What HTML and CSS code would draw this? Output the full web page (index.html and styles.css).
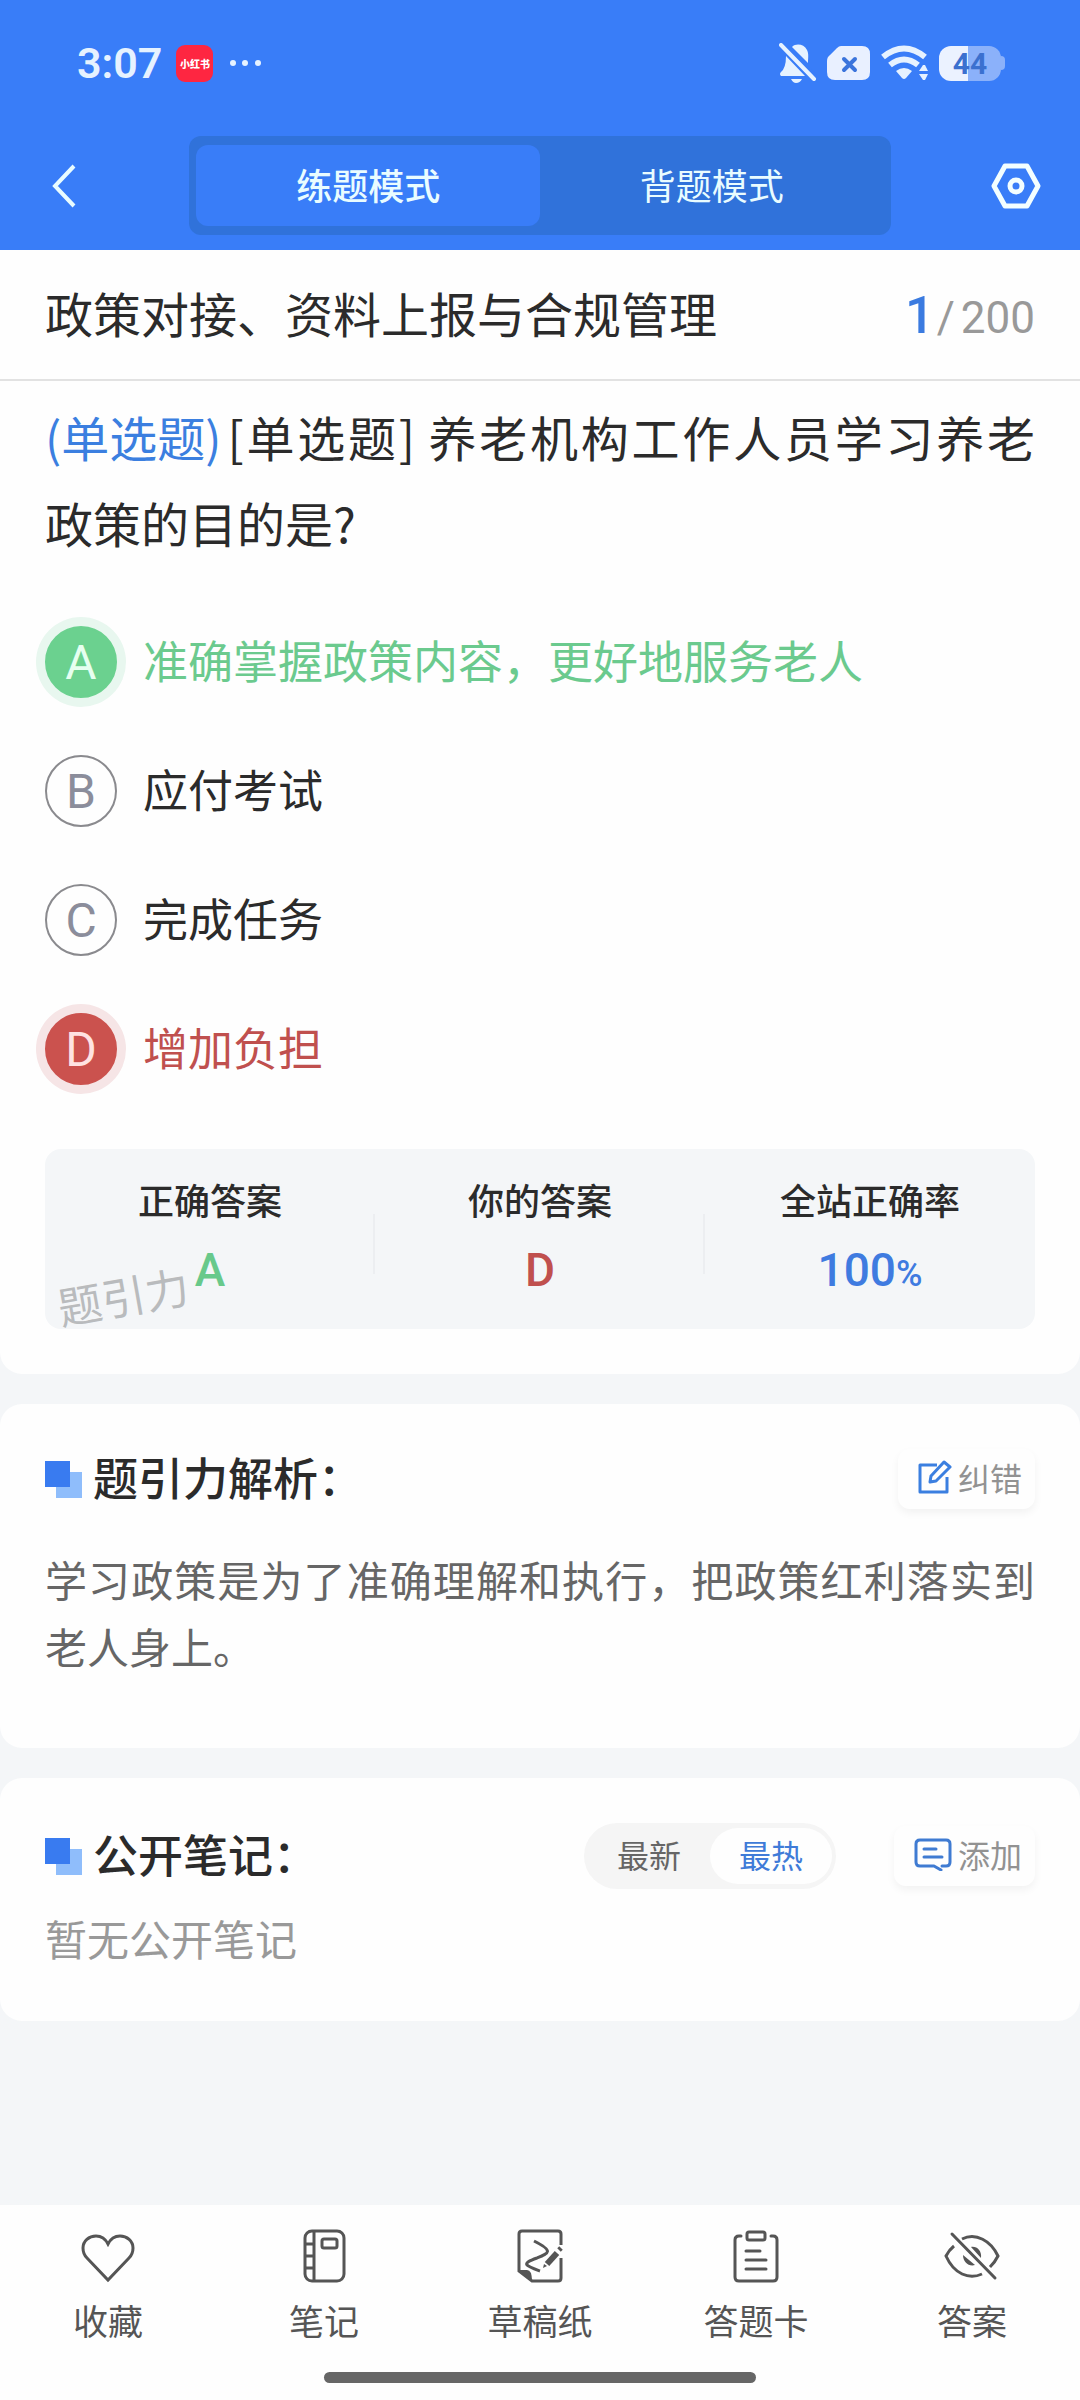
FILE: index.html
```html
<!DOCTYPE html>
<html lang="zh-CN">

<head>
    <meta charset="UTF-8">
    <meta name="viewport" content="width=device-width, initial-scale=1.0">
    <title>练题模式</title>
    <link rel="stylesheet" href="styles.css">
</head>

<body>
    <div class="app">
        <header class="top">
            <div class="status-bar">
                <span class="time">3:07</span>
                <span class="app-badge">小红书</span>
                <svg class="dots" width="32" height="8" viewBox="0 0 32 8" fill="#e6f2ff">
                    <circle cx="3" cy="4" r="3" />
                    <circle cx="15" cy="4" r="3" />
                    <circle cx="28" cy="4" r="3" />
                </svg>
                <div class="status-icons">
                    <svg width="38" height="40" viewBox="0 0 38 40" fill="#e6f2ff">
                        <path d="M13 4 C17 0 25 1 28 7 C30 11 29 15 29 20 Z" />
                        <path d="M7 13 L26 33 H2 Q0 31 2 29 Q7 25 7 13 Z" />
                        <path d="M12 36 H23 Q21 40 17 40 Q14 40 12 36 Z" />
                        <path d="M5 0 L38 34" stroke="#397df8" stroke-width="3" />
                        <path d="M2 2 L35 36" stroke="#e6f2ff" stroke-width="4" stroke-linecap="round" />
                    </svg>
                    <svg width="44" height="36" viewBox="0 0 44 36">
                        <path d="M14 1 H35 Q43 1 43 9 V27 Q43 35 35 35 H8 Q0 35 0 27 V16 Q0 12 3 10 L10 3 Q12 1 14 1 Z" fill="#e9f0ff" />
                        <path d="M17 14 L28 25 M28 14 L17 25" stroke="#3b74dc" stroke-width="4" stroke-linecap="round" />
                    </svg>
                    <svg width="48" height="36" viewBox="0 0 48 36" fill="none" stroke="#e6f2ff" stroke-width="6">
                        <path d="M2 12 Q23 -5 44 12" />
                        <path d="M9 20 Q23 9 37 20" />
                        <path d="M15 26 Q23 20 31 26 L25 33 Q23 35 21 33 Z" fill="#e6f2ff" stroke="none" />
                        <path d="M38 26 L42 20 Q43 20 44 20 L47 26 Z M38 29 H47 L44 35 H42 Z" fill="#e6f2ff" stroke="none" />
                    </svg>
                    <span class="battery"><span class="battery-body">44</span><i class="battery-tip"></i></span>
                </div>
            </div>
            <div class="title-bar">
                <button class="icon-btn" aria-label="返回">
                    <svg width="24" height="44" viewBox="0 0 24 44" fill="none" stroke="#e9fcff" stroke-width="4">
                        <path d="M22 2 L3 22 L22 42" />
                    </svg>
                </button>
                <div class="mode-switch">
                    <button class="mode active">练题模式</button>
                    <button class="mode">背题模式</button>
                </div>
                <button class="icon-btn" aria-label="设置">
                    <svg width="50" height="46" viewBox="0 0 50 46" fill="none" stroke="#f3feff" stroke-width="5" stroke-linejoin="round">
                        <path d="M14 3 H36 L47 23 L36 43 H14 L3 23 Z" />
                        <circle cx="25" cy="23" r="6" />
                    </svg>
                </button>
            </div>
        </header>

        <main>
            <section class="card question-card">
                <div class="chapter">
                    <h1>政策对接、资料上报与合规管理</h1>
                    <div class="counter"><b>1</b><span>/</span>200</div>
                </div>
                <div class="question">
                    <p class="stem"><span class="kind">(单选题)</span><span>[单选题] 养老机构工作人员学习养老政策的目的是?</span></p>
                    <div class="options">
                        <button class="option right"><span class="letter">A</span><span class="answer">准确掌握政策内容，更好地服务老人</span></button>
                        <button class="option"><span class="letter">B</span><span class="answer">应付考试</span></button>
                        <button class="option"><span class="letter">C</span><span class="answer">完成任务</span></button>
                        <button class="option wrong"><span class="letter">D</span><span class="answer">增加负担</span></button>
                    </div>
                    <div class="result">
                        <div class="result-item">
                            <span>正确答案</span>
                            <strong class="green">A</strong>
                        </div>
                        <div class="result-item">
                            <span>你的答案</span>
                            <strong class="red">D</strong>
                        </div>
                        <div class="result-item">
                            <span>全站正确率</span>
                            <strong class="blue">100<small>%</small></strong>
                        </div>
                        <span class="watermark">题引力</span>
                    </div>
                </div>
            </section>

            <section class="card analysis">
                <div class="card-head">
                    <i class="mark"></i>
                    <h2>题引力解析：</h2>
                    <button class="small-btn">
                        <svg width="34" height="34" viewBox="0 0 34 34" fill="none" stroke="#3b7fe0" stroke-width="3" stroke-linejoin="round">
                            <path d="M19 5 H2 V32 H29 V17" />
                            <path d="M12 22 L13 16 L26 2 L32 7 L18 21 Z" />
                        </svg>
                        纠错
                    </button>
                </div>
                <p class="analysis-text">学习政策是为了准确理解和执行，把政策红利落实到老人身上。</p>
            </section>

            <section class="card notes">
                <div class="card-head">
                    <i class="mark"></i>
                    <h2>公开笔记：</h2>
                    <div class="sort">
                        <button>最新</button>
                        <button class="active">最热</button>
                    </div>
                    <button class="small-btn">
                        <svg width="38" height="34" viewBox="0 0 38 34" fill="none" stroke="#3f7bd2" stroke-width="3" stroke-linecap="round" stroke-linejoin="round">
                            <path d="M27 33 L20 29 H6 Q2 29 2 25 V7 Q2 3 6 3 H32 Q36 3 36 7 V25 Q36 29 32 29 H28" />
                            <path d="M10 12 H22 M10 20 H28" />
                        </svg>
                        添加
                    </button>
                </div>
                <p class="empty">暂无公开笔记</p>
            </section>
        </main>

        <footer class="bottom">
            <nav class="tabs">
                <button class="tab">
                    <svg viewBox="0 0 56 56">
                        <path d="M28 16 C25 10 21 8 16 8 C9 8 3 13 3 20 C3 24 4 27 7 30 L28 52 L49 30 C52 27 53 24 53 20 C53 13 47 8 40 8 C35 8 31 10 28 16 Z" />
                    </svg>
                    收藏
                </button>
                <button class="tab">
                    <svg viewBox="0 0 56 56">
                        <rect x="9" y="3" width="39" height="50" rx="7" />
                        <path d="M18 3 V53 M9 16 H18 M9 28 H18 M9 40 H18" />
                        <rect x="26" y="11" width="15" height="9" rx="2" />
                    </svg>
                    笔记
                </button>
                <button class="tab">
                    <svg viewBox="0 0 56 56">
                        <path d="M49 17 V6 Q49 3 46 3 H10 Q7 3 7 6 V43 L20 53 H46 Q49 53 49 50 V30" />
                        <path d="M22 13 C42 23 37 25 25 30 C8 36 14 38 28 43" />
                        <path d="M7 42 H15 Q20 42 20 53 Z" fill="#555" stroke="none" />
                        <path d="M35 36 L45 25" stroke-width="6" />
                        <path d="M47 22 L49 20" stroke-width="5" />
                        <path d="M31 40 L32 36 L35 38 Z" fill="#555" stroke="none" />
                    </svg>
                    草稿纸
                </button>
                <button class="tab">
                    <svg viewBox="0 0 56 56">
                        <path d="M13 8 H11 Q7 8 7 12 V49 Q7 53 11 53 H45 Q49 53 49 49 V12 Q49 8 45 8 H43" stroke-linecap="round" />
                        <rect x="19" y="4" width="18" height="8" rx="2" />
                        <path d="M18 23 H32 M18 32 H38 M18 41 H38" stroke-linecap="round" />
                    </svg>
                    答题卡
                </button>
                <button class="tab">
                    <svg viewBox="0 0 56 56">
                        <path d="M18 11 C32 4 47 13 54 28 Q51 34 46 39" />
                        <path d="M10 18 Q5 22 2 28 C10 46 25 52 38 46" />
                        <path d="M27 19 C33 18 38 23 37 30 Z M19 27 C19 34 25 39 31 37 Z" fill="#555" stroke="none" />
                        <path d="M8 6 L51 50" stroke-linecap="round" />
                    </svg>
                    答案
                </button>
            </nav>
            <div class="home-bar"></div>
        </footer>
    </div>
</body>

</html>
```
FILE: styles.css
```css
* {
    box-sizing: border-box;
}

body {
    margin: 0;
    font-family: "Noto Sans CJK SC", sans-serif;
    color: #2b2b2b;
    background-color: #f4f6f8;
}

button {
    padding: 0;
    border: none;
    background: none;
    font-family: inherit;
    color: inherit;
    cursor: pointer;
}

h1,
h2,
p {
    margin: 0;
    font-weight: 400;
}

svg {
    display: block;
    flex: none;
}

.app {
    display: flex;
    flex-direction: column;
    min-height: 100vh;
}

/* header */
.top {
    background-color: #397df8;
    padding-bottom: 15px;
}

.status-bar {
    display: flex;
    align-items: center;
    height: 126px;
    padding: 0 75px 0 77px;
}

.time {
    font-family: Roboto, sans-serif;
    font-size: 43px;
    font-weight: 600;
    line-height: 48px;
    color: #e6f2ff;
}

.app-badge {
    width: 37px;
    height: 37px;
    margin: 0 17px 0 14px;
    border-radius: 9px;
    background-color: #fe2641;
    color: #fff;
    font-size: 10px;
    font-weight: 900;
    line-height: 37px;
    text-align: center;
    white-space: nowrap;
}

.status-icons {
    display: flex;
    align-items: center;
    gap: 10px;
    margin-left: auto;
}

.battery {
    display: flex;
    align-items: center;
}

.battery-body {
    width: 62px;
    height: 35px;
    border-radius: 12px;
    background: linear-gradient(to right, #ebf2ff 47%, #8bb1fa 47%);
    color: #3b70cf;
    font-family: Roboto, sans-serif;
    font-size: 30px;
    font-weight: 700;
    line-height: 36px;
    text-align: center;
}

.battery-tip {
    width: 4px;
    height: 14px;
    border-radius: 0 4px 4px 0;
    background-color: #8bb1fa;
}

.title-bar {
    display: flex;
    align-items: center;
    justify-content: space-between;
    margin-top: 10px;
    padding: 0 39px;
}

.icon-btn {
    display: flex;
    align-items: center;
    justify-content: center;
    width: 50px;
    height: 50px;
}

.mode-switch {
    display: flex;
    width: 70%;
    padding: 9px 7px;
    border-radius: 12px;
    background-color: #3072da;
}

.mode {
    flex: 1;
    height: 81px;
    padding-bottom: 4px;
    border-radius: 12px;
    color: #e9fcff;
    font-size: 36px;
}

.mode.active {
    background-color: #397df8;
    font-weight: 500;
}

/* cards */
.card {
    margin-bottom: 30px;
    border-radius: 22px;
    background-color: #fefefe;
}

.question-card {
    border-radius: 0 0 22px 22px;
}

.chapter {
    display: flex;
    align-items: center;
    justify-content: space-between;
    height: 131px;
    padding: 0 45px;
    border-bottom: 2px solid #e2e2e2;
}

.chapter h1 {
    padding-bottom: 6px;
    font-size: 48px;
    line-height: 72px;
}

.counter {
    padding-top: 4px;
    font-family: Roboto, sans-serif;
    font-size: 44px;
    line-height: 60px;
    color: #999;
}

.counter b {
    font-size: 52px;
    font-weight: 500;
    color: #3b7be0;
}

.counter span {
    margin: 0 6px 0 2px;
}

.question {
    padding: 12px 45px 45px;
}

.stem {
    font-size: 48px;
    line-height: 86px;
    text-align: justify;
}

.kind {
    display: inline-block;
    margin-right: 6px;
    color: #3b7fe0;
}

.options {
    display: flex;
    flex-direction: column;
    gap: 57px;
    margin: 61px 0 64px;
}

.option {
    display: flex;
    align-items: center;
    gap: 26px;
    font-size: 45px;
    line-height: 68px;
    text-align: left;
}

.answer {
    padding-bottom: 4px;
}

.letter {
    flex: none;
    width: 72px;
    height: 72px;
    border: 2px solid #8a8a8e;
    border-radius: 50%;
    color: #8b8d9b;
    font-family: Roboto, sans-serif;
    font-size: 48px;
    line-height: 70px;
    text-align: center;
}

.option.right {
    color: #6bca8e;
}

.option.wrong {
    color: #c0504e;
}

.option.right .letter {
    border-color: #6bd18f;
    background-color: #6bd18f;
    box-shadow: 0 0 0 9px #e8f7ef;
    color: #e6fff0;
}

.option.wrong .letter {
    border-color: #cb524e;
    background-color: #cb524e;
    box-shadow: 0 0 0 9px #f6e5e6;
    color: #ffe3e2;
}

.result {
    position: relative;
    display: flex;
    padding: 22px 0 27px;
    border-radius: 16px;
    background-color: #f4f6f8;
}

.result-item {
    display: flex;
    flex: 1;
    flex-direction: column;
    align-items: center;
    gap: 15px;
    font-size: 36px;
    font-weight: 500;
    line-height: 56px;
    background: linear-gradient(#eceef1, #eceef1) no-repeat right 60% / 2px 60px;
}

.result-item:nth-child(3) {
    background: none;
}

.result-item strong {
    font-family: Roboto, sans-serif;
    font-size: 46px;
    font-weight: 500;
}

.result-item small {
    font-size: 36px;
}

.green {
    color: #68c98b;
}

.red {
    color: #c0504e;
}

.blue {
    color: #3f7be0;
}

.watermark {
    position: absolute;
    left: 12px;
    bottom: 2px;
    font-size: 44px;
    line-height: 64px;
    color: #b9bbbd;
    transform: rotate(-10deg);
}

.card-head {
    display: flex;
    align-items: center;
    height: 66px;
}

.mark {
    width: 37px;
    height: 37px;
    margin-right: 11px;
    background:
        linear-gradient(#397bf0, #397bf0) no-repeat left top / 25px 26px,
        linear-gradient(#8fbdfb, #8fbdfb) no-repeat right bottom / 26px 26px;
}

.card-head h2 {
    margin-right: auto;
    padding-bottom: 4px;
    font-size: 45px;
    font-weight: 500;
    line-height: 62px;
}

.small-btn {
    display: flex;
    align-items: center;
    gap: 6px;
    height: 60px;
    padding: 0 13px 4px 20px;
    border-radius: 12px;
    box-shadow: 0 4px 8px rgba(0, 0, 0, 0.05);
    color: #929292;
    font-size: 32px;
}

.analysis {
    padding: 42px 45px 69px;
}

.analysis-text {
    margin-top: 33px;
    font-size: 42px;
    line-height: 67px;
    text-align: justify;
    color: #666;
}

.notes {
    padding: 45px 45px 52px;
}

.sort {
    display: flex;
    margin-right: 58px;
    padding: 5px 4px;
    border-radius: 33px;
    background-color: #f5f5f5;
}

.sort button {
    width: 122px;
    height: 56px;
    padding-bottom: 4px;
    border-radius: 28px;
    color: #666;
    font-size: 32px;
}

.sort .active {
    background-color: #fefefe;
    color: #3f7bd8;
}

.empty {
    margin-top: 18px;
    font-size: 42px;
    line-height: 62px;
    color: #999;
}

/* bottom tabs */
.bottom {
    margin-top: auto;
    padding-bottom: 17px;
    background-color: #fefefe;
}

.tabs {
    display: flex;
    padding: 23px 0 25px;
}

.tab {
    display: flex;
    flex: 1;
    flex-direction: column;
    align-items: center;
    gap: 9px;
    color: #555;
    font-size: 35px;
    line-height: 54px;
}

.tab svg {
    width: 56px;
    height: 56px;
    fill: none;
    stroke: #555;
    stroke-width: 3;
}

.home-bar {
    width: 40%;
    height: 11px;
    margin: 0 auto;
    border-radius: 6px;
    background-color: #666;
}
```
